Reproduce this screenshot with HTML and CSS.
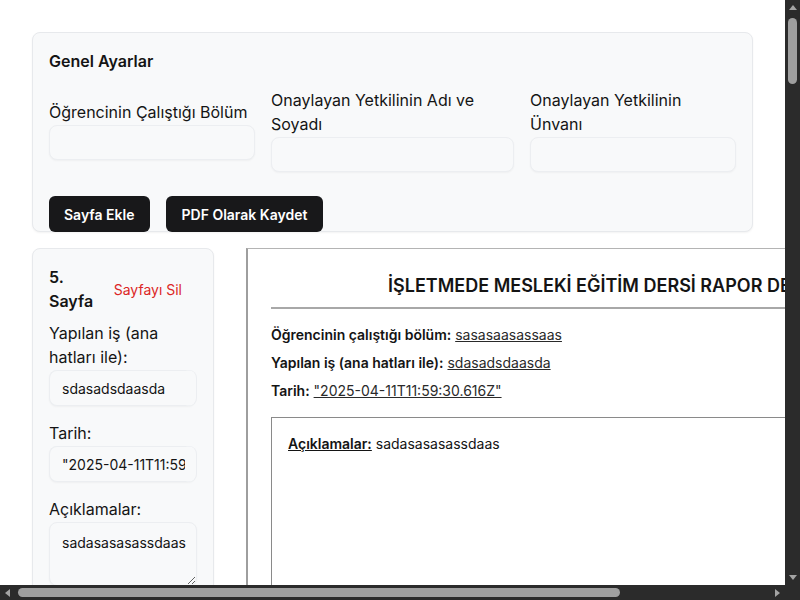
FILE: index.html
```html
<!DOCTYPE html>
<html lang="tr">
<head>
<meta charset="utf-8">
<title>Rapor Defteri</title>
<link rel="stylesheet" href="styles.css">
</head>
<body>
<div class="screen">
  <div class="viewport">
    <div class="app">
      <section class="card settings">
        <h2 class="settings-title">Genel Ayarlar</h2>
        <div class="fields">
          <div class="field">
            <label class="label">Öğrencinin Çalıştığı Bölüm</label>
            <input class="input input-top" type="text">
          </div>
          <div class="field">
            <label class="label">Onaylayan Yetkilinin Adı ve Soyadı</label>
            <input class="input input-top" type="text">
          </div>
          <div class="field">
            <label class="label">Onaylayan Yetkilinin Ünvanı</label>
            <input class="input input-top" type="text">
          </div>
        </div>
        <div class="actions">
          <button class="btn">Sayfa Ekle</button>
          <button class="btn btn-wide">PDF Olarak Kaydet</button>
        </div>
      </section>

      <div class="workspace">
        <aside class="card editor">
          <div class="editor-head">
            <h3 class="editor-title">5. Sayfa</h3>
            <button class="danger">Sayfayı Sil</button>
          </div>
          <div class="group">
            <label class="label">Yapılan iş (ana hatları ile):</label>
            <input class="input input-clip" type="text" value="sdasadsdaasda">
          </div>
          <div class="group">
            <label class="label">Tarih:</label>
            <input class="input input-clip" type="text" value="&quot;2025-04-11T11:59:30.616Z&quot;">
          </div>
          <div class="group">
            <label class="label">Açıklamalar:</label>
            <textarea class="input textarea">sadasasasassdaas</textarea>
          </div>
        </aside>

        <main class="preview">
          <h1 class="doc-title">İŞLETMEDE MESLEKİ EĞİTİM DERSİ RAPOR DEFTERİ</h1>
          <hr class="rule">
          <p class="row"><b>Öğrencinin çalıştığı bölüm:</b> <u class="val">sasasaasassaas</u></p>
          <p class="row"><b>Yapılan iş (ana hatları ile):</b> <u class="val">sdasadsdaasda</u></p>
          <p class="row"><b>Tarih:</b> <u class="val">"2025-04-11T11:59:30.616Z"</u></p>
          <div class="notes">
            <p class="row"><b class="ul">Açıklamalar:</b> sadasasasassdaas</p>
          </div>
        </main>
      </div>
    </div>
  </div>

  <div class="vbar">
    <span class="arrow arrow-up"></span>
    <div class="vtrack"><span class="vthumb"></span></div>
    <span class="arrow arrow-down"></span>
  </div>
  <div class="hbar">
    <span class="arrow arrow-left"></span>
    <div class="htrack"><span class="hthumb"></span></div>
    <span class="arrow arrow-right"></span>
  </div>
  <div class="corner"></div>
</div>
</body>
</html>
```
FILE: styles.css
```css
html {
  background: #ffffff;
}
body {
  margin: 0;
  background: #ffffff;
  color: #141414;
  font-family: Inter, "Noto Sans", sans-serif;
  font-size: 16px;
  line-height: 24px;
  overflow: hidden;
}
.screen {
  display: grid;
  grid-template-columns: 785px 15px;
  grid-template-rows: 585px 15px;
  width: 800px;
  height: 600px;
}
.viewport {
  overflow: hidden;
  background: #ffffff;
}
.app {
  padding: 32px;
}

/* scrollbars */
.vbar {
  background: #2b2b2b;
  display: flex;
  flex-direction: column;
  align-items: center;
}
.hbar {
  background: #2b2b2b;
  display: flex;
  align-items: center;
}
.corner {
  background: #2b2b2b;
}
.arrow {
  flex: 0 0 15px;
  width: 15px;
  height: 15px;
  display: flex;
  align-items: center;
  justify-content: center;
}
.arrow::before {
  content: "";
  width: 0;
  height: 0;
}
.arrow-up::before {
  border-left: 4px solid transparent;
  border-right: 4px solid transparent;
  border-bottom: 5px solid #a3a3a3;
}
.arrow-down::before {
  border-left: 4px solid transparent;
  border-right: 4px solid transparent;
  border-top: 5px solid #a3a3a3;
}
.arrow-left::before {
  border-top: 4px solid transparent;
  border-bottom: 4px solid transparent;
  border-right: 5px solid #a3a3a3;
}
.arrow-right::before {
  border-top: 4px solid transparent;
  border-bottom: 4px solid transparent;
  border-left: 5px solid #a3a3a3;
}
.vtrack {
  flex: 1;
  width: 15px;
  display: flex;
  justify-content: center;
}
.vthumb {
  width: 9px;
  height: 66px;
  margin-top: 3px;
  border-radius: 5px;
  background: #9f9f9f;
}
.htrack {
  flex: 1;
  height: 15px;
  display: flex;
  align-items: center;
}
.hthumb {
  width: 602px;
  height: 9px;
  margin-left: 3px;
  border-radius: 5px;
  background: #9f9f9f;
}

/* cards */
.card {
  background: #f8f9fa;
  border: 1px solid #e7e9ec;
  border-radius: 8px;
  box-shadow: 0 1px 2px rgba(0, 0, 0, 0.05);
  box-sizing: border-box;
}
.settings {
  padding: 16px 16px 0;
}
.settings-title {
  margin: 0 0 15px;
  font-size: 16px;
  line-height: 24px;
  font-weight: 600;
}
.fields {
  display: grid;
  grid-template-columns: 206fr 243fr 206fr;
  gap: 16px;
  align-items: center;
}
.label {
  display: block;
  font-size: 16px;
  line-height: 24px;
  color: #141414;
  margin-bottom: 1px;
}
.input {
  display: block;
  width: 100%;
  box-sizing: border-box;
  height: 36px;
  padding: 0 12px;
  font-family: Inter, "Noto Sans", sans-serif;
  font-size: 14px;
  color: #141414;
  background: #f8f9fa;
  border: 1px solid #eceef1;
  border-radius: 8px;
  box-shadow: 0 1px 2px rgba(0, 0, 0, 0.04);
  outline: none;
}
.input-top {
  height: 35px;
}
.input-clip {
  width: calc(100% - 1px);
  padding-right: 0;
  border-right: 11px solid #f8f9fa;
  box-shadow: 1px 0 0 0 #eceef1, 0 1px 2px rgba(0, 0, 0, 0.04);
}
.actions {
  display: flex;
  gap: 16px;
  margin-top: 24px;
  margin-bottom: -1px;
}
.btn {
  height: 36px;
  padding: 0 15px;
  border: none;
  border-radius: 6px;
  background: #18181a;
  color: #ffffff;
  font-family: Inter, "Noto Sans", sans-serif;
  font-size: 14px;
  font-weight: 600;
}
.btn-wide {
  padding: 0 16px;
}
.workspace {
  display: flex;
  align-items: flex-start;
  gap: 32px;
  margin-top: 16px;
}
.editor {
  width: 182px;
  flex-shrink: 0;
  padding: 16px;
}
.editor-head {
  display: flex;
  align-items: center;
  justify-content: space-between;
  margin-bottom: 8px;
}
.editor-title {
  margin: 0;
  font-size: 16px;
  line-height: 24px;
  font-weight: 600;
}
.danger {
  flex-shrink: 0;
  white-space: nowrap;
  background: none;
  border: none;
  padding: 4px 15px;
  color: #dc2626;
  font-family: Inter, "Noto Sans", sans-serif;
  font-size: 14px;
}
.group {
  margin-bottom: 15px;
}
.textarea {
  height: 64px;
  padding: 10px 6px 10px 12px;
  line-height: 20px;
  resize: vertical;
  overflow: auto;
}

/* preview */
.preview {
  width: 737px;
  flex-shrink: 0;
  box-sizing: border-box;
  min-height: 4720px;
  background: #ffffff;
  border: 1px solid #b4b4b4;
  border-left: 2px solid #9e9e9e;
  padding: 24px 24px 24px 23px;
  color: #141414;
}
.doc-title {
  margin: 0 0 8px;
  text-align: center;
  font-size: 18px;
  line-height: 26px;
  font-weight: 600;
}
.rule {
  margin: 0 0 16px;
  border: none;
  border-top: 2px solid #a8a8a8;
}
.row {
  margin: 0 0 8px;
  font-size: 14px;
  line-height: 20px;
}
.row b {
  font-weight: 600;
}
.val {
  color: #2a2a2a;
}
.notes {
  margin-top: 16px;
  border: 1px solid #8a8a8a;
  padding: 16px;
  min-height: 4200px;
}
.ul {
  text-decoration: underline;
}
```
